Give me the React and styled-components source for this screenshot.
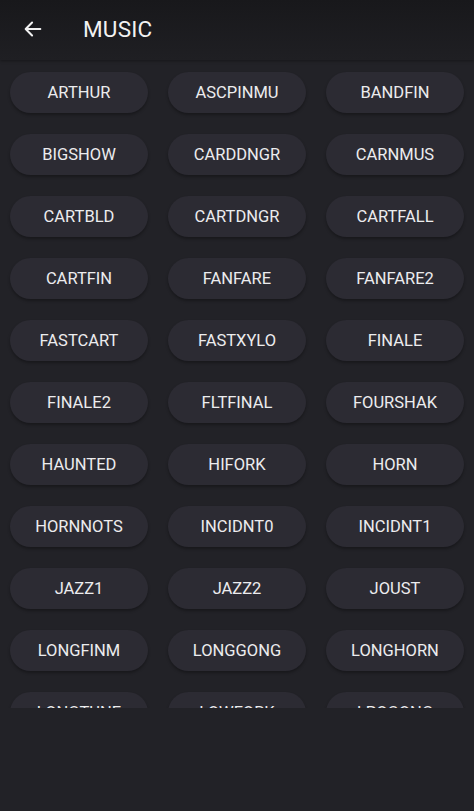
import React from "react";
import styled, { createGlobalStyle } from "styled-components";

const GlobalStyle = createGlobalStyle`
  html, body {
    margin: 0;
    padding: 0;
    background: #222227;
  }
  body {
    font-family: Roboto, "Noto Sans", sans-serif;
  }
`;

const tracks = [
  "ARTHUR", "ASCPINMU", "BANDFIN",
  "BIGSHOW", "CARDDNGR", "CARNMUS",
  "CARTBLD", "CARTDNGR", "CARTFALL",
  "CARTFIN", "FANFARE", "FANFARE2",
  "FASTCART", "FASTXYLO", "FINALE",
  "FINALE2", "FLTFINAL", "FOURSHAK",
  "HAUNTED", "HIFORK", "HORN",
  "HORNNOTS", "INCIDNT0", "INCIDNT1",
  "JAZZ1", "JAZZ2", "JOUST",
  "LONGFINM", "LONGGONG", "LONGHORN",
  "LONGTUNE", "LOWFORK", "LPOGONG",
];

function App() {
  return (
    <>
      <GlobalStyle />
      <Screen>
        <Header>
          <BackButton aria-label="back">
            <svg width="22" height="22" viewBox="0 0 24 24" fill="none">
              <path
                d="M20 12H4.5M11 5l-7 7 7 7"
                stroke="#f2f2f2"
                strokeWidth="2.2"
                strokeLinecap="round"
                strokeLinejoin="round"
              />
            </svg>
          </BackButton>
          <Title>MUSIC</Title>
        </Header>
        <List>
          <Grid>
            {tracks.map((name) => (
              <Track key={name}>{name}</Track>
            ))}
          </Grid>
        </List>
      </Screen>
    </>
  );
}

export default App;

const Screen = styled.div`
  width: 474px;
  height: 811px;
  display: flex;
  flex-direction: column;
  background: #222227;
  overflow: hidden;
`;

const Header = styled.header`
  height: 60px;
  flex-shrink: 0;
  display: flex;
  align-items: center;
  padding-bottom: 3px;
  box-sizing: border-box;
  background: linear-gradient(#18181b, #1f1f23);
  box-shadow: 0 1px 3px rgba(0, 0, 0, 0.35);
  position: relative;
  z-index: 1;
`;

const BackButton = styled.button`
  width: 24px;
  height: 24px;
  margin-left: 21px;
  padding: 0;
  border: none;
  background: none;
  display: flex;
  align-items: center;
  justify-content: center;
`;

const Title = styled.h1`
  margin: 0 0 0 38px;
  color: #f2f2f2;
  font-size: 22.5px;
  font-weight: 400;
  letter-spacing: 0.2px;
`;

const List = styled.div`
  height: 648px;
  overflow: hidden;
`;

const Grid = styled.div`
  display: grid;
  grid-template-columns: repeat(3, 138px);
  column-gap: 20px;
  row-gap: 21px;
  padding: 12px 10px;
`;

const Track = styled.button`
  height: 41px;
  border: none;
  border-radius: 21px;
  background: #2c2b33;
  color: #ececee;
  font-family: Roboto, "Noto Sans", sans-serif;
  font-size: 16.5px;
  font-weight: 400;
  box-shadow: 0 2px 3px rgba(0, 0, 0, 0.3);
  padding: 0 0 1px;
`;
